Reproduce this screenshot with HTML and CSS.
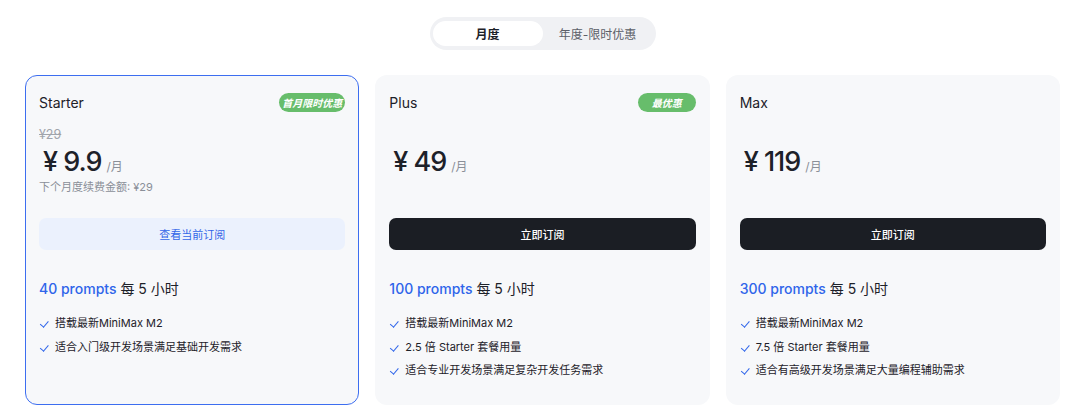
FILE: index.html
```html
<!DOCTYPE html>
<html lang="zh-CN">
<head>
    <meta charset="UTF-8">
    <meta name="viewport" content="width=device-width, initial-scale=1.0">
    <title>Coding Plan</title>
    <link rel="stylesheet" href="styles.css">
</head>
<body>
    <div class="toggle">
        <div class="tab active">月度</div>
        <div class="tab">年度-限时优惠</div>
    </div>

    <div class="plans">
        <div class="card current">
            <div class="card-head">
                <span class="name">Starter</span>
                <span class="badge">首月限时优惠</span>
            </div>
            <div class="old">¥29</div>
            <div class="price"><span class="amount">¥ 9.9</span><span class="unit">/月</span></div>
            <div class="renew">下个月度续费金额: ¥29</div>
            <button class="btn light">查看当前订阅</button>
            <div class="quota"><span class="num">40 prompts</span> 每 5 小时</div>
            <ul class="features">
                <li>搭载最新MiniMax M2</li>
                <li>适合入门级开发场景满足基础开发需求</li>
            </ul>
        </div>

        <div class="card">
            <div class="card-head">
                <span class="name">Plus</span>
                <span class="badge">最优惠</span>
            </div>
            <div class="old"></div>
            <div class="price"><span class="amount">¥ 49</span><span class="unit">/月</span></div>
            <div class="renew"></div>
            <button class="btn dark">立即订阅</button>
            <div class="quota"><span class="num">100 prompts</span> 每 5 小时</div>
            <ul class="features">
                <li>搭载最新MiniMax M2</li>
                <li>2.5 倍 Starter 套餐用量</li>
                <li>适合专业开发场景满足复杂开发任务需求</li>
            </ul>
        </div>

        <div class="card">
            <div class="card-head">
                <span class="name">Max</span>
            </div>
            <div class="old"></div>
            <div class="price"><span class="amount">¥ 119</span><span class="unit">/月</span></div>
            <div class="renew"></div>
            <button class="btn dark">立即订阅</button>
            <div class="quota"><span class="num">300 prompts</span> 每 5 小时</div>
            <ul class="features">
                <li>搭载最新MiniMax M2</li>
                <li>7.5 倍 Starter 套餐用量</li>
                <li>适合有高级开发场景满足大量编程辅助需求</li>
            </ul>
        </div>
    </div>
</body>
</html>
```

FILE: styles.css
```css
body {
    margin: 0;
    padding: 17px 20px 0 25px;
    background: #fff;
    font-family: Inter, "Noto Sans CJK SC", sans-serif;
    color: #1d2129;
}
.toggle {
    display: flex;
    width: 226px;
    height: 33px;
    margin: 0 auto;
    padding: 4px 3px;
    box-sizing: border-box;
    background: #f0f1f4;
    border-radius: 17px;
}
.tab {
    flex: 1;
    display: flex;
    justify-content: center;
    align-items: center;
    font-size: 12px;
    color: #5c6068;
    border-radius: 13px;
}
.tab.active {
    flex: 0 0 110px;
    background: #fff;
    color: #1d2129;
    font-weight: 600;
}
.plans {
    display: grid;
    grid-template-columns: repeat(3, 1fr);
    gap: 16px;
    margin-top: 25px;
}
.card {
    height: 330px;
    box-sizing: border-box;
    padding: 16px 13px 0 13px;
    background: #f7f8fa;
    border: 1px solid transparent;
    border-radius: 12px;
}
.card.current {
    border-color: #3d6ef0;
}
.card-head {
    display: flex;
    justify-content: space-between;
    align-items: center;
    height: 20px;
}
.name {
    font-size: 14px;
}
.badge {
    min-width: 58px;
    height: 19px;
    padding: 0 3px;
    box-sizing: border-box;
    display: flex;
    justify-content: center;
    align-items: center;
    background: #67bd6b;
    color: #fff;
    font-size: 10px;
    font-weight: 700;
    font-style: italic;
    border-radius: 10px;
}
.old {
    height: 20px;
    margin-top: 13px;
    line-height: 20px;
    font-size: 12.5px;
    color: #a0a4ab;
    text-decoration: line-through;
}
.price {
    height: 34px;
    display: flex;
    align-items: baseline;
    padding-left: 4px;
}
.amount {
    font-size: 27px;
    font-weight: 500;
    letter-spacing: -1px;
}
.unit {
    margin-left: 5px;
    font-size: 12px;
    color: #8a8f98;
}
.renew {
    height: 16px;
    line-height: 16px;
    font-size: 11px;
    color: #8a8f98;
}
.btn {
    display: block;
    width: 100%;
    height: 32px;
    margin-top: 23px;
    border: none;
    border-radius: 7px;
    font-family: inherit;
    font-size: 11px;
    cursor: pointer;
}
.btn.light {
    background: #ebf1fd;
    color: #3366e8;
}
.btn.dark {
    background: #1b1e24;
    color: #fff;
    font-weight: 500;
}
.quota {
    margin-top: 27px;
    line-height: 24px;
    font-size: 14px;
    color: #1d2129;
}
.quota .num {
    color: #2f65ea;
    font-weight: 500;
}
.features {
    list-style: none;
    margin: 11px 0 0 0;
    padding: 0;
}
.features li {
    position: relative;
    line-height: 23.5px;
    padding-left: 16px;
    font-size: 11px;
    color: #1d2129;
}
.features li::before {
    content: "";
    position: absolute;
    left: 3px;
    top: 7px;
    width: 3.5px;
    height: 6.5px;
    border-right: 1.8px solid #2f65ea;
    border-bottom: 1.8px solid #2f65ea;
    transform: rotate(40deg);
}
```
